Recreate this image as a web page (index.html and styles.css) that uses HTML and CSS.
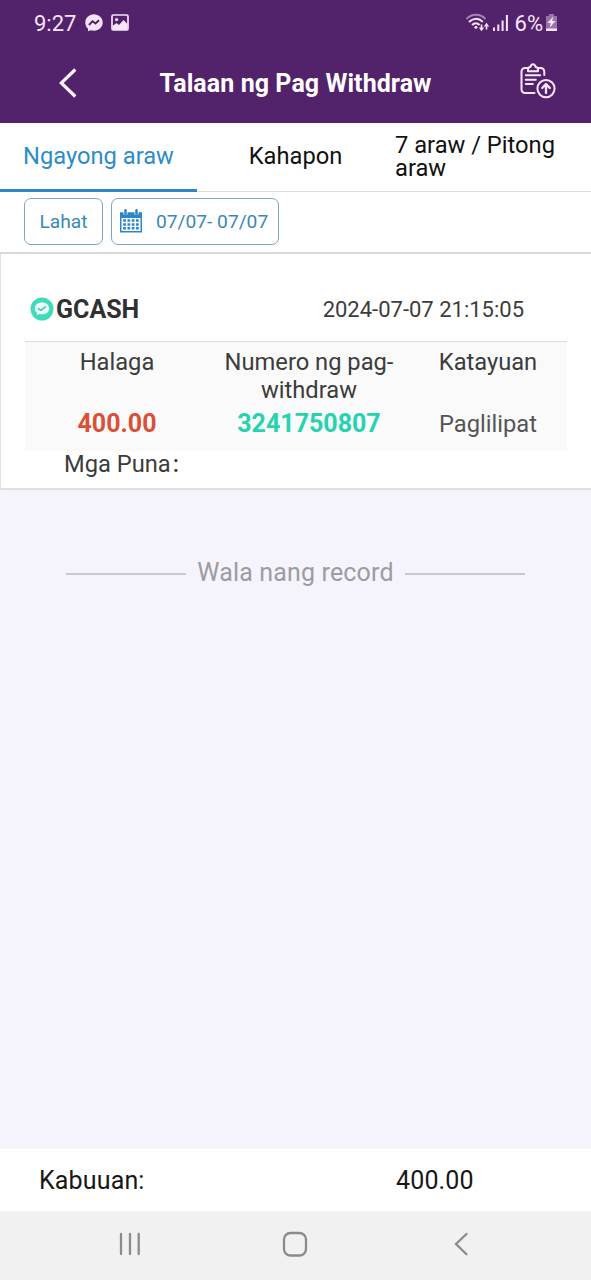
FILE: index.html
```html
<!DOCTYPE html>
<html lang="fil">
<head>
<meta charset="utf-8">
<title>Talaan ng Pag Withdraw</title>
<link rel="stylesheet" href="styles.css">
</head>
<body>
<div class="screen">
  <header class="top">
    <div class="status">
      <span class="clock">9:27</span>
      <svg class="ic-msg" width="18" height="18" viewBox="0 0 18 18"><path d="M9 .3C4 .3.3 3.900.3 8.600c0 2.500 1 4.700 2.700 6.200l.1 2.500 2.700-1.100c1 .3 2 .5 3.200.5 5 0 8.700-3.500 8.700-8.100S14 .3 9 .3z" fill="#f8e4fb"/><path d="M4 11l3.500-3.800 3 2.300L14 6.200" fill="none" stroke="#50216a" stroke-width="1.900"/></svg>
      <svg class="ic-pic" width="18" height="17" viewBox="0 0 18 17"><rect x="1" y="1" width="16" height="15" rx="1.200" fill="none" stroke="#f8e4fb" stroke-width="1.700"/><circle cx="5.600" cy="5.600" r="1.600" fill="#f8e4fb"/><path d="M1.500 12l4-3 2.500 2 4.500-5 4 4v6h-15z" fill="#f8e4fb"/></svg>
      <div class="status-right">
        <svg width="24" height="20" viewBox="0 0 24 20" fill="none" stroke="#f8e4fb" stroke-width="1.900"><path d="M.5 6C5.500.3 14.500.3 19.500 6" opacity=".5"/><path d="M3 9c4-4.200 9.800-4.200 13.800-.2"/><path d="M6 12c2.300-2.400 5.300-2.400 7.600 0"/><circle cx="9.900" cy="14.300" r="1.500" fill="#f8e4fb" stroke="none"/><path d="M15.500 11.500V16M20.500 16.500V12" stroke-width="1.600"/><path d="M12.800 14.500h5.400l-2.700 3.700zM17.800 13.500h5.400L20.500 9.800z" fill="#f8e4fb" stroke="none"/></svg>
        <svg class="signal" width="17" height="18" viewBox="0 0 17 18" fill="#f8e4fb"><path d="M1 13.500h2V17H1zM5.300 10.500h2V17h-2zM9.600 6.500h2V17h-2zM13.900 1h2v16h-2z"/></svg>
        <span class="pct">6%</span>
        <svg width="13" height="19" viewBox="0 0 13 19"><path d="M4 1h5v2h3v15H1V3h3z" fill="#f8e4fb" opacity=".42"/><path d="M1 15.500h11V18H1zM8.200 3.500L2.500 10h3.300l-1.200 4.700L10.600 8H7.200z" fill="#f8e4fb"/></svg>
      </div>
    </div>
    <div class="titlebar">
      <svg class="back" width="18" height="30" viewBox="0 0 18 30"><path d="M16.300 1.500L2.300 15l14 13.500" fill="none" stroke="#fff0ff" stroke-width="3.200"/></svg>
      <h1 class="title">Talaan ng Pag Withdraw</h1>
      <svg class="clip" width="36" height="36" viewBox="0 0 36 36" fill="none" stroke="#fbe6ff" stroke-width="2" stroke-linecap="round" stroke-linejoin="round"><path d="M7.500 5H5A3.500 3.500 0 0 0 1.500 8.500v18A3.500 3.500 0 0 0 5 30h9.500M18.500 5h2.200A3.500 3.500 0 0 1 24.300 8.500v3.500"/><path d="M8 8.200V6.500c0-1.500.8-2.200 2.400-2.400C10.800 2.200 11.700 1.200 13 1.200s2.200 1 2.600 2.900c1.600.2 2.400.9 2.400 2.400v1.700z"/><path d="M5.800 12.300h14.400M5.800 16.700h10M5.800 21h7"/><circle cx="26" cy="25.600" r="8.600"/><path d="M26 30v-8.600M22.200 25l3.800-4 3.800 4" stroke-width="2.300"/></svg>
    </div>
  </header>

  <nav class="tabs">
    <div class="tab active">Ngayong araw</div>
    <div class="tab">Kahapon</div>
    <div class="tab last">7 araw / Pitong araw</div>
  </nav>

  <div class="filters">
    <button class="pill all">Lahat</button>
    <button class="pill range">
      <svg width="22" height="24" viewBox="0 0 22 24"><path fill="#2d86c8" fill-rule="evenodd" d="M0 3.300h22V23.500H0zM1.500 9v13h19V9z"/><path d="M5.500.5v5M16.500.5v5" stroke="#fff" stroke-width="4"/><path d="M5.500 1.200v3.600M16.500 1.200v3.600" stroke="#2d86c8" stroke-width="2.500" stroke-linecap="round"/><path d="M3.200 11.600h15.600M3.200 15.400h15.600M3.200 19.200h15.600" stroke="#2d86c8" stroke-width="2.500" stroke-dasharray="2.800 1.450"/></svg>
      <span>07/07- 07/07</span>
    </button>
  </div>

  <section class="card">
    <div class="card-head">
      <svg width="24" height="24" viewBox="0 0 24 24"><circle cx="12" cy="12" r="11.500" fill="#3fdcbc"/><path d="M12 5.500c-4.200 0-7.200 2.500-7.200 6 0 1.800.9 3.300 2.300 4.300l-.4 2.300 2.500-1.200c.8.300 1.800.4 2.800.4 4.200 0 7.200-2.400 7.200-5.800s-3-6-7.200-6z" fill="#edfffb"/><path d="M8 11.300l2.800 2 5.200-3.800" fill="none" stroke="#3cbfa3" stroke-width="1.500"/></svg>
      <span class="method">GCASH</span>
      <time class="date">2024-07-07 21:15:05</time>
    </div>
    <div class="grid">
      <div class="label">Halaga</div>
      <div class="label">Numero ng pag-<br>withdraw</div>
      <div class="label">Katayuan</div>
      <div class="value amount">400.00</div>
      <div class="value number">3241750807</div>
      <div class="value state">Paglilipat</div>
    </div>
    <div class="note">Mga Puna<span class="colon">:</span></div>
  </section>

  <main class="empty"><span class="rule"></span><span class="empty-text">Wala nang record</span><span class="rule"></span></main>

  <footer class="total"><span class="total-label">Kabuuan:</span><span class="total-value">400.00</span></footer>

  <div class="navbar">
    <svg width="24" height="24" viewBox="0 0 24 24" stroke="#8b8b8b" stroke-width="2.300" stroke-linecap="round"><path d="M3 2v20M12 2v20M20.700 2v20"/></svg>
    <svg class="home" width="26" height="28" viewBox="0 0 26 28"><rect x="2" y="3" width="22" height="22.500" rx="6.500" fill="none" stroke="#8b8b8b" stroke-width="2.300"/></svg>
    <svg width="16" height="26" viewBox="0 0 16 26"><path d="M13.500 3L3 13l10.500 10.300" fill="none" stroke="#8b8b8b" stroke-width="2.300" stroke-linecap="round"/></svg>
  </div>
</div>
</body>
</html>
```

FILE: styles.css
```css
* { box-sizing: border-box; }
body { margin: 0; font-family: Roboto, "Liberation Sans", sans-serif; }
svg { display: block; flex: none; }
.screen { width: 591px; height: 1280px; display: flex; flex-direction: column; background: #f5f4fd; overflow: hidden; white-space: nowrap; }

.top { height: 123px; background: #52226b; flex: none; }
.status { height: 45px; padding: 0 33px 0 34px; display: flex; align-items: center; color: #f8e4fb; }
.clock { width: 42px; font-size: 22px; padding-top: 1px; }
.ic-msg { margin-left: 9px; }
.ic-pic { margin-left: 8px; }
.status-right { margin-left: auto; display: flex; align-items: center; }
.pct { font-size: 22px; margin: 0 2px 0 6px; padding-top: 1px; }
.signal { margin-left: 2px; }
.titlebar { height: 76px; padding: 0 35px 0 59px; display: flex; align-items: center; }
.title { margin: 0 0 0 82.500px; font-size: 25px; letter-spacing: 0.07px; font-weight: 700; color: #fff; }
.clip { margin: -4px 0 0 auto; }

.tabs { height: 69px; flex: none; display: grid; grid-template-columns: 197px 197px 197px; background: #fff; border-bottom: 1px solid #dedede; font-size: 23.700px; color: #111; }
.tab { height: 69px; display: flex; align-items: center; justify-content: center; padding-bottom: 3px; }
.active { color: #2d8cc8; border-bottom: 3px solid #3087c4; padding-bottom: 0; }
.last { justify-content: flex-start; white-space: normal; line-height: 23px; padding: 0 20px 2px 1px; }

.filters { height: 62px; flex: none; padding: 6px 24px 0; display: flex; align-items: flex-start; gap: 8px; background: #fff; border-bottom: 2px solid #d9d9d9; }
.pill { height: 47px; border: 1px solid #79a9bd; border-radius: 7px; background: #fff; color: #3988b8; font: 19.200px Roboto, "Liberation Sans", sans-serif; padding: 0 0 1px; display: flex; align-items: center; }
.all { width: 79px; justify-content: center; }
.range { width: 168px; padding-left: 8px; gap: 14px; }

.card { height: 236px; flex: none; padding: 34px 24px 0 24px; background: #fff; border-left: 1px solid #e2e2e6; border-bottom: 2px solid #e0e0e4; color: #3c3c3c; }
.card-head { height: 54px; display: flex; align-items: center; padding: 0 43px 12px 5px; border-bottom: 1px solid #dcdcdc; }
.method { margin-left: 2px; padding-top: 1px; font-size: 25px; font-weight: 700; color: #303030; }
.date { margin-left: auto; padding-top: 1px; font-size: 22px; }
.grid { height: 109px; display: grid; grid-template-columns: 184px 200px 158px; grid-template-rows: 62px 28px; align-content: start; padding-top: 6px; background: #fafafa; text-align: center; font-size: 23.700px; line-height: 28px; }
.amount { color: #dc4f37; font-weight: 700; font-size: 25px; }
.number { color: #25d3ae; font-weight: 700; font-size: 25px; }
.state { color: #555; }
.note { padding-left: 39px; font-size: 23.700px; line-height: 26px; }
.colon { margin-left: 2px; font-weight: 500; }

.empty { flex: 1; padding-top: 68px; display: flex; align-items: flex-start; justify-content: center; gap: 11.500px; color: #9c9c9f; font-size: 25px; letter-spacing: 0.150px; line-height: 30px; }
.rule { width: 120px; height: 2px; background: #c9c8ce; margin-top: 15px; }

.total { height: 62px; flex: none; display: flex; align-items: center; padding-left: 39px; background: #fff; font-size: 25px; letter-spacing: 0.150px; color: #171717; }
.total-label { width: 357px; }
.navbar { height: 69px; flex: none; display: flex; align-items: center; padding: 0 122px 3px 118px; justify-content: space-between; background: #f1f1f1; }
.home { margin-right: 6px; }
```
